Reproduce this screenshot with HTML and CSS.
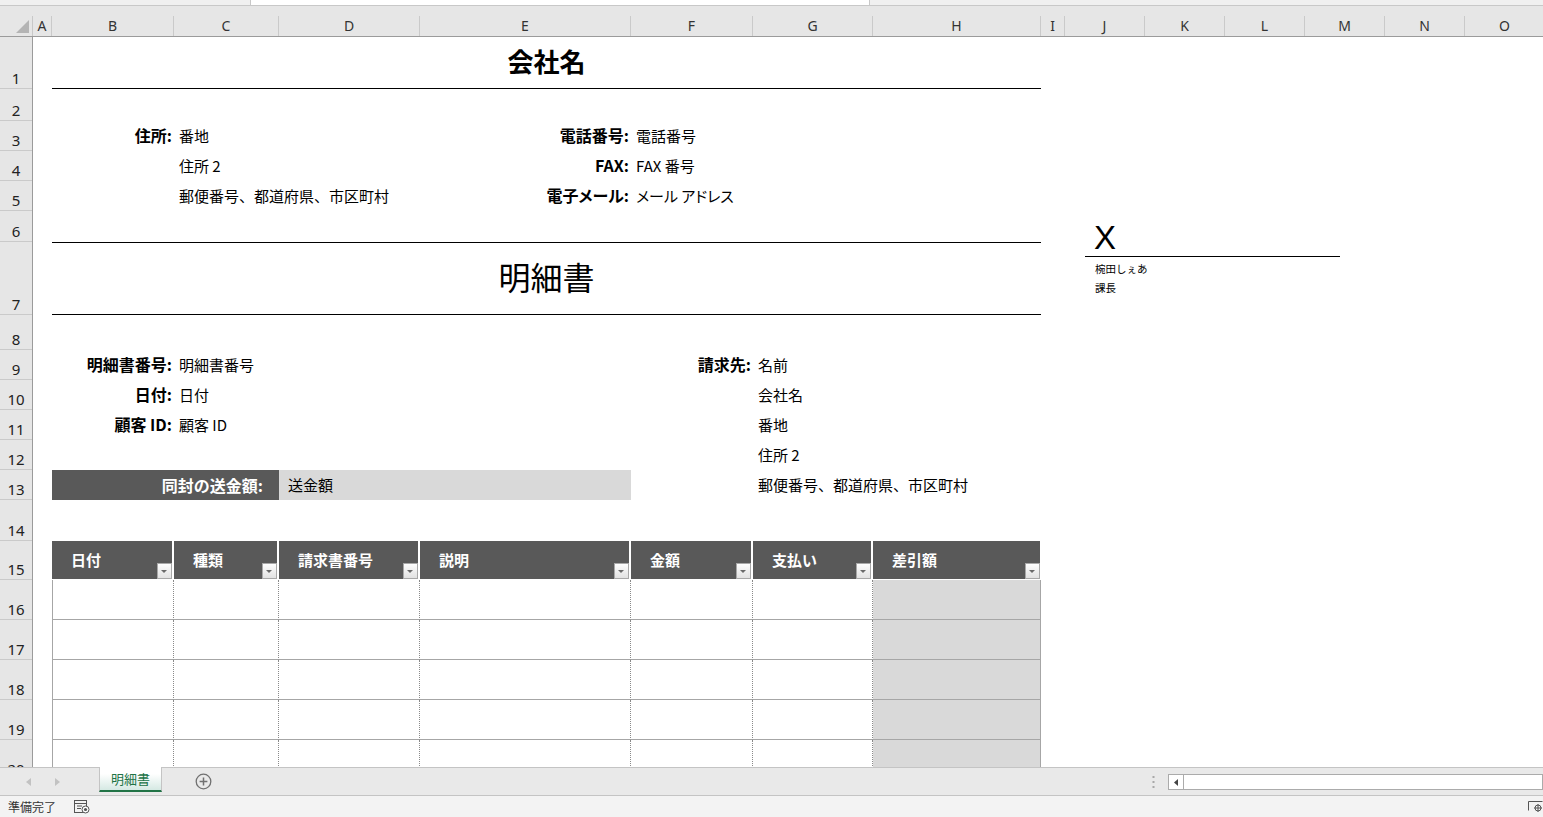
FILE: index.html
```html
<!DOCTYPE html>
<html lang="ja">
<head>
<meta charset="utf-8">
<title>明細書</title>
<link rel="stylesheet" href="styles.css">
</head>
<body>
<div class="app">
  <div class="topbar">
    <div class="formula-strip"><div class="formula-box"></div></div>
  </div>

  <div class="colhead">
    <div class="corner">
      <svg width="32" height="20" viewBox="0 0 32 20"><polygon points="29,4 29,17 16,17" fill="#b4b4b4"/></svg>
    </div>
    <div class="ch">A</div><div class="ch">B</div><div class="ch">C</div><div class="ch">D</div>
    <div class="ch">E</div><div class="ch">F</div><div class="ch">G</div><div class="ch">H</div>
    <div class="ch">I</div><div class="ch">J</div><div class="ch">K</div><div class="ch">L</div>
    <div class="ch">M</div><div class="ch">N</div><div class="ch">O</div>
  </div>

  <div class="main">
    <div class="rowhead">
      <div class="rh h52">1</div>
      <div class="rh h32">2</div>
      <div class="rh h30">3</div>
      <div class="rh h30">4</div>
      <div class="rh h30">5</div>
      <div class="rh h31">6</div>
      <div class="rh h73">7</div>
      <div class="rh h35">8</div>
      <div class="rh h30">9</div>
      <div class="rh h30">10</div>
      <div class="rh h30">11</div>
      <div class="rh h30">12</div>
      <div class="rh h30">13</div>
      <div class="rh h41">14</div>
      <div class="rh h39">15</div>
      <div class="rh h40">16</div>
      <div class="rh h40">17</div>
      <div class="rh h40">18</div>
      <div class="rh h40">19</div>
      <div class="rh h40">20</div>
    </div>

    <div class="sheet">
      <div class="row h52"><div class="title-company span-bh">会社名</div></div>
      <div class="row h32"></div>
      <div class="row h30">
        <div class="lbl col-b">住所:</div><div class="val col-c">番地</div>
        <div class="lbl col-e">電話番号:</div><div class="val col-f">電話番号</div>
      </div>
      <div class="row h30">
        <div class="val col-c">住所 2</div>
        <div class="lbl col-e">FAX:</div><div class="val col-f">FAX 番号</div>
      </div>
      <div class="row h30">
        <div class="val col-c">郵便番号、都道府県、市区町村</div>
        <div class="lbl palt col-e">電子メール:</div><div class="val palt col-f">メール アドレス</div>
      </div>
      <div class="row h31"></div>
      <div class="row h73"><div class="title-doc span-bh">明細書</div></div>
      <div class="row h35"></div>
      <div class="row h30">
        <div class="lbl col-b">明細書番号:</div><div class="val col-c">明細書番号</div>
        <div class="lbl col-f">請求先:</div><div class="val col-g">名前</div>
      </div>
      <div class="row h30">
        <div class="lbl col-b">日付:</div><div class="val col-c">日付</div>
        <div class="val col-g">会社名</div>
      </div>
      <div class="row h30">
        <div class="lbl col-b">顧客 ID:</div><div class="val col-c">顧客 ID</div>
        <div class="val col-g">番地</div>
      </div>
      <div class="row h30">
        <div class="val col-g">住所 2</div>
      </div>
      <div class="row h30">
        <div class="amount-label span-bc">同封の送金額:</div>
        <div class="amount-value span-de">送金額</div>
        <div class="val col-g">郵便番号、都道府県、市区町村</div>
      </div>
      <div class="row h41"></div>
      <div class="row h39">
        <div class="th col-b">日付<span class="dd"></span></div>
        <div class="th col-c">種類<span class="dd"></span></div>
        <div class="th col-d">請求書番号<span class="dd"></span></div>
        <div class="th col-e">説明<span class="dd"></span></div>
        <div class="th col-f">金額<span class="dd"></span></div>
        <div class="th col-g">支払い<span class="dd"></span></div>
        <div class="th th-last col-h">差引額<span class="dd"></span></div>
      </div>
      <div class="row h40">
        <div class="td td-first col-b"></div><div class="td col-c"></div><div class="td col-d"></div><div class="td col-e"></div><div class="td col-f"></div><div class="td col-g"></div><div class="td td-shade col-h"></div>
      </div>
      <div class="row h40">
        <div class="td td-first col-b"></div><div class="td col-c"></div><div class="td col-d"></div><div class="td col-e"></div><div class="td col-f"></div><div class="td col-g"></div><div class="td td-shade col-h"></div>
      </div>
      <div class="row h40">
        <div class="td td-first col-b"></div><div class="td col-c"></div><div class="td col-d"></div><div class="td col-e"></div><div class="td col-f"></div><div class="td col-g"></div><div class="td td-shade col-h"></div>
      </div>
      <div class="row h40">
        <div class="td td-first col-b"></div><div class="td col-c"></div><div class="td col-d"></div><div class="td col-e"></div><div class="td col-f"></div><div class="td col-g"></div><div class="td td-shade col-h"></div>
      </div>
      <div class="row h40">
        <div class="td td-first col-b"></div><div class="td col-c"></div><div class="td col-d"></div><div class="td col-e"></div><div class="td col-f"></div><div class="td col-g"></div><div class="td td-shade col-h"></div>
      </div>

      <div class="signature">
        <div class="sig-mark">X</div>
        <div class="sig-name sig-first">椀田しぇあ</div>
        <div class="sig-name">課長</div>
      </div>
    </div>
  </div>

  <div class="tabbar">
    <div class="sheet-nav">
      <svg width="5" height="8" viewBox="0 0 5 8"><polygon points="5,0 5,8 0,4" fill="#c2c2c2"/></svg>
      <svg width="5" height="8" viewBox="0 0 5 8"><polygon points="0,0 0,8 5,4" fill="#c2c2c2"/></svg>
    </div>
    <div class="tab">明細書</div>
    <div class="add-sheet">
      <svg width="17" height="17" viewBox="0 0 17 17"><circle cx="8.5" cy="8.5" r="7.3" fill="none" stroke="#707070" stroke-width="1.3"/><path d="M8.5 4.6v7.8M4.6 8.5h7.8" stroke="#707070" stroke-width="1.5"/></svg>
    </div>
    <div class="spacer"></div>
    <div class="split-dots">
      <svg width="3" height="12" viewBox="0 0 3 12"><rect x="0.5" y="0" width="2" height="2" fill="#a8a8a8"/><rect x="0.5" y="5" width="2" height="2" fill="#a8a8a8"/><rect x="0.5" y="10" width="2" height="2" fill="#a8a8a8"/></svg>
    </div>
    <div class="hscroll">
      <div class="hscroll-btn"><svg width="4" height="7" viewBox="0 0 4 7"><polygon points="4,0 4,7 0,3.5" fill="#444"/></svg></div>
    </div>
  </div>

  <div class="statusbar">
    <span class="status-text">準備完了</span>
    <svg class="status-icon" width="16" height="14" viewBox="0 0 16 14"><rect x="0.5" y="0.5" width="12" height="12" fill="none" stroke="#555"/><path d="M0.5 3.5h12M3 6h5M3 8.5h4" stroke="#555"/><circle cx="11.5" cy="9.5" r="3.5" fill="#fff" stroke="#555"/><circle cx="11.5" cy="9.5" r="1.6" fill="#555"/></svg>
    <div class="spacer"></div>
    <svg class="status-right" width="15" height="12" viewBox="0 0 15 12"><path d="M0.5 9.5V0.5H14.5" fill="none" stroke="#555"/><circle cx="10" cy="7" r="3" fill="none" stroke="#555"/><path d="M10 3v8M6 7h8" stroke="#555"/></svg>
  </div>
</div>
</body>
</html>
```

FILE: styles.css
```css
:root {
  --cols: 19px 122px 105px 141px 211px 122px 120px 168px 24px 80px 80px 80px 80px 80px 80px;
}

* {
  box-sizing: border-box;
  margin: 0;
  padding: 0;
}

html, body {
  width: 1543px;
  height: 817px;
  overflow: hidden;
}

body {
  font-family: "Noto Sans CJK JP", "Noto Sans", sans-serif;
  color: #000;
  background: #fff;
}

.app {
  display: flex;
  flex-direction: column;
  width: 1543px;
  height: 817px;
  overflow: hidden;
}

/* top strip (bottom of formula bar) */
.topbar {
  height: 16px;
  flex-shrink: 0;
  background: #e6e6e6;
}

.formula-strip {
  height: 6px;
  display: flex;
  padding-left: 250px;
  background: #f0f0f0;
  border-bottom: 1px solid #c8c8c8;
}

.formula-box {
  width: 620px;
  background: #fff;
  border-left: 1px solid #c8c8c8;
  border-right: 1px solid #c8c8c8;
}

/* column headers */
.colhead {
  display: grid;
  grid-template-columns: 33px var(--cols);
  height: 21px;
  flex-shrink: 0;
  background: #e6e6e6;
  border-bottom: 1px solid #9b9b9b;
}

.corner {
  border-right: 1px solid #c8c8c8;
}

.corner svg {
  display: block;
}

.ch {
  display: flex;
  align-items: center;
  justify-content: center;
  border-right: 1px solid #cacaca;
  font-family: "Noto Sans", sans-serif;
  font-size: 14px;
  line-height: 1;
  color: #333;
}

/* main grid area */
.main {
  display: flex;
  height: 730px;
  flex-shrink: 0;
  overflow: hidden;
}

.rowhead {
  width: 33px;
  flex-shrink: 0;
  display: flex;
  flex-direction: column;
  background: #e6e6e6;
  border-right: 1px solid #9b9b9b;
}

.rh {
  flex-shrink: 0;
  display: flex;
  align-items: flex-end;
  justify-content: center;
  padding-bottom: 1px;
  border-bottom: 1px solid #cacaca;
  font-family: "Noto Sans", sans-serif;
  font-size: 15px;
  line-height: 18px;
  color: #222;
}

.sheet {
  position: relative;
  flex: 1;
  display: flex;
  flex-direction: column;
}

.row {
  display: grid;
  grid-template-columns: var(--cols);
  flex-shrink: 0;
}

.h30 { height: 30px; }
.h31 { height: 31px; }
.h32 { height: 32px; }
.h35 { height: 35px; }
.h39 { height: 39px; }
.h40 { height: 40px; }
.h41 { height: 41px; }
.h52 { height: 52px; }
.h73 { height: 73px; }

.span-bh { grid-column: 2 / 9; }
.span-bc { grid-column: 2 / 4; }
.span-de { grid-column: 4 / 6; }
.col-b { grid-column: 2; }
.col-c { grid-column: 3; }
.col-d { grid-column: 4; }
.col-e { grid-column: 5; }
.col-f { grid-column: 6; }
.col-g { grid-column: 7; }
.col-h { grid-column: 8; }

.title-company {
  display: flex;
  align-items: center;
  justify-content: center;
  padding-bottom: 4px;
  font-size: 26px;
  font-weight: 700;
  line-height: 1.2;
  border-bottom: 1px solid #000;
}

.title-doc {
  display: flex;
  align-items: center;
  justify-content: center;
  padding-bottom: 4px;
  font-size: 32px;
  line-height: 1.2;
  border-top: 1px solid #000;
  border-bottom: 1px solid #000;
}

.lbl {
  display: flex;
  align-items: center;
  justify-content: flex-end;
  padding-right: 2px;
  padding-bottom: 1px;
  font-size: 16px;
  font-weight: 700;
  line-height: 1.2;
  white-space: nowrap;
}

.val {
  display: flex;
  align-items: center;
  padding-left: 5px;
  padding-bottom: 1px;
  font-size: 15px;
  line-height: 1.2;
  white-space: nowrap;
}

.palt {
  font-feature-settings: "palt" 1;
}

.amount-label {
  display: flex;
  align-items: center;
  justify-content: flex-end;
  padding-right: 16px;
  padding-bottom: 1px;
  background: #595959;
  color: #fff;
  font-size: 16px;
  font-weight: 700;
  white-space: nowrap;
}

.amount-value {
  display: flex;
  align-items: center;
  padding-left: 9px;
  padding-bottom: 1px;
  background: #d9d9d9;
  font-size: 15px;
}

/* table */
.th {
  position: relative;
  display: flex;
  align-items: center;
  padding-left: 19px;
  padding-bottom: 2px;
  background: #595959;
  color: #fff;
  font-size: 15px;
  font-weight: 700;
  white-space: nowrap;
  border-right: 2px solid #fff;
  border-bottom: 1px solid #fff;
}

.th-last {
  border-right: 1px solid #fff;
}

.dd {
  position: absolute;
  right: 0;
  bottom: 0;
  width: 15px;
  height: 16px;
  border: 1px solid #a8a8a8;
  background: linear-gradient(#fdfdfd, #e2e2e2);
}

.dd::after {
  content: "";
  position: absolute;
  left: 3px;
  top: 6px;
  border-left: 3.5px solid transparent;
  border-right: 3.5px solid transparent;
  border-top: 3.5px solid #6a6a6a;
}

.td {
  border-right: 1px dotted #8a8a8a;
  border-bottom: 1px solid #a6a6a6;
}

.td-first {
  border-left: 1px solid #a6a6a6;
}

.td-shade {
  background: #d9d9d9;
  border-right: 1px solid #a6a6a6;
}

/* floating signature block */
.signature {
  position: absolute;
  left: 1052px;
  top: 184px;
  width: 255px;
}

.sig-mark {
  padding-left: 9px;
  padding-bottom: 2px;
  border-bottom: 1px solid #000;
  font-family: "Liberation Sans", Arial, sans-serif;
  font-size: 33px;
  line-height: 33px;
}

.sig-name {
  padding-left: 10px;
  font-size: 10.5px;
  line-height: 19px;
}

.sig-first {
  padding-top: 2px;
}

/* sheet tabs */
.tabbar {
  display: flex;
  height: 29px;
  flex-shrink: 0;
  background: #e9e9e9;
  border-top: 1px solid #c4c4c4;
  border-bottom: 1px solid #c4c4c4;
}

.sheet-nav {
  width: 99px;
  display: flex;
  align-items: center;
  gap: 24px;
  padding-left: 26px;
}

.tab {
  width: 63px;
  height: 25px;
  margin-top: -1px;
  display: flex;
  align-items: center;
  justify-content: center;
  background: linear-gradient(#ffffff 30%, #d5e9e3);
  border-left: 1px solid #c4c4c4;
  border-right: 1px solid #c4c4c4;
  border-bottom: 2px solid #217346;
  color: #217346;
  font-size: 13px;
}

.add-sheet {
  margin-left: 33px;
  display: flex;
  align-items: center;
}

.spacer {
  flex: 1;
}

.split-dots {
  width: 17px;
  display: flex;
  align-items: center;
  padding-left: 1px;
}

.hscroll {
  width: 375px;
  height: 16px;
  margin-top: 6px;
  display: flex;
  background: #fff;
  border: 1px solid #ababab;
}

.hscroll-btn {
  width: 15px;
  display: flex;
  align-items: center;
  justify-content: center;
  border-right: 1px solid #ababab;
}

/* status bar */
.statusbar {
  height: 21px;
  flex-shrink: 0;
  display: flex;
  align-items: center;
  padding-left: 8px;
  background: #f3f3f3;
}

.status-text {
  font-size: 12px;
  color: #333;
}

.status-icon {
  margin-left: 18px;
}

.status-right {
  margin-right: 0;
}
```
